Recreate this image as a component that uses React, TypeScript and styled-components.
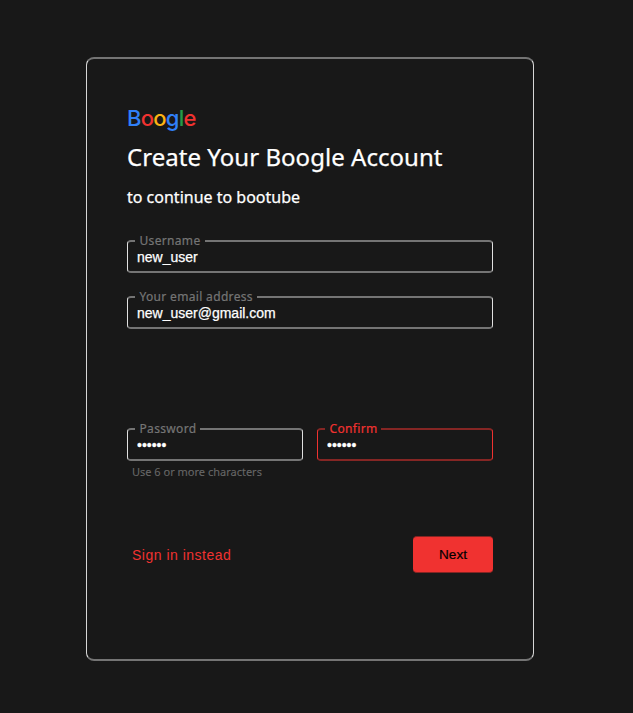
import React from "react";
import styled, { createGlobalStyle } from "styled-components";

const GlobalStyle = createGlobalStyle`
  *, *::before, *::after { box-sizing: border-box; }
  body { margin: 0; background: #181818; font-family: "Noto Sans", sans-serif; overflow: hidden; }
`;

const Page = styled.main`
  height: 713px;
  padding: 57px 0 0 86px;
  background: #181818;
  color: #fff;
`;

const Card = styled.form`
  display: flex;
  flex-direction: column;
  width: 448px;
  height: 604px;
  padding: 43px 40px 0;
  border: solid #d6d6d6;
  border-width: 2px 1px;
  border-top-color: #747474;
  border-bottom-color: #747474;
  border-radius: 8px;
`;

const Logo = styled.div`
  height: 36px;
  font: 500 22px/33px Inter, sans-serif;
  letter-spacing: -0.75px;
`;

const Letter = styled.span<{ $color: string }>`
  color: ${(p) => p.$color};
`;

const Title = styled.h1`
  margin: 0;
  height: 36px;
  font-size: 24px;
  font-weight: 400;
  line-height: 38px;
  letter-spacing: 0.04px;
  white-space: nowrap;
  -webkit-text-stroke: 0.25px #fff;
`;

const Subtitle = styled.p`
  margin: 6px 0 0;
  height: 60px;
  font-size: 16px;
  line-height: 34px;
  -webkit-text-stroke: 0.25px #fff;
`;

const Field = styled.div`
  position: relative;
  flex: 1;
`;

const Label = styled.label<{ $error?: boolean }>`
  position: absolute;
  top: -8px;
  left: 8px;
  padding: 0 4px 0 4.5px;
  background: #181818;
  color: ${(p) => (p.$error ? "#f03230" : "#757575")};
  font-size: 12px;
  line-height: 17px;
  letter-spacing: 0.33px;
  -webkit-text-stroke: 0.2px;
`;

const Input = styled.input<{ $error?: boolean }>`
  display: block;
  width: 100%;
  height: 33px;
  padding: 1px 9px 0;
  outline: none;
  border: solid ${(p) => (p.$error ? "#f03230" : "#e0e0e0")};
  border-width: 2px 1px;
  border-top-color: ${(p) => (p.$error ? "#852624" : "#747474")};
  border-bottom-color: ${(p) => (p.$error ? "#852624" : "#747474")};
  border-radius: 4px;
  background: transparent;
  color: #fff;
  font: 14px "Liberation Sans", Arial, sans-serif;
  -webkit-text-stroke: 0.25px #fff;
`;

const Stack = styled.div`
  display: grid;
  gap: 23px;
`;

const Passwords = styled.div`
  display: flex;
  gap: 14px;
  margin-top: 99px;
`;

const Hint = styled.div`
  margin: 2px 0 0 5px;
  height: 18px;
  color: #676767;
  font-size: 11px;
  line-height: 17px;
  -webkit-text-stroke: 0.1px;
`;

const Actions = styled.div`
  display: flex;
  align-items: center;
  justify-content: space-between;
  margin-top: 55px;
`;

const SignIn = styled.a`
  margin-left: 5px;
  color: #f03230;
  font: 14px "Liberation Sans", Arial, sans-serif;
  letter-spacing: 0.5px;
`;

const NextButton = styled.button`
  width: 80px;
  height: 37px;
  padding: 0;
  border: solid #f03230;
  border-width: 1px 0;
  border-top-color: #842523;
  border-bottom-color: #842523;
  border-radius: 4px;
  background: #f03230;
  color: #000;
  font: 13.6px "Liberation Sans", Arial, sans-serif;
  -webkit-text-stroke: 0.2px;
`;

const logoLetters: [string, string][] = [
  ["B", "#3080f8"],
  ["o", "#f03230"],
  ["o", "#fbb314"],
  ["g", "#3080f8"],
  ["l", "#249a48"],
  ["e", "#f03230"],
];

interface TextFieldProps {
  id: string;
  label: string;
  value: string;
  type?: string;
  error?: boolean;
}

function TextField({ id, label, value, type = "text", error }: TextFieldProps) {
  return (
    <Field>
      <Input id={id} type={type} defaultValue={value} $error={error} spellCheck={false} />
      <Label htmlFor={id} $error={error}>{label}</Label>
    </Field>
  );
}

export default function App() {
  return (
    <>
      <GlobalStyle />
      <Page>
        <Card>
          <Logo>
            {logoLetters.map(([char, color], i) => (
              <Letter key={i} $color={color}>{char}</Letter>
            ))}
          </Logo>
          <Title>Create Your Boogle Account</Title>
          <Subtitle>to continue to bootube</Subtitle>
          <Stack>
            <TextField id="username" label="Username" value="new_user" />
            <TextField id="email" label="Your email address" value="new_user@gmail.com" />
          </Stack>
          <Passwords>
            <TextField id="password" label="Password" value="secret" type="password" />
            <TextField id="confirm" label="Confirm" value="secre7" type="password" error />
          </Passwords>
          <Hint>Use 6 or more characters</Hint>
          <Actions>
            <SignIn>Sign in instead</SignIn>
            <NextButton type="button">Next</NextButton>
          </Actions>
        </Card>
      </Page>
    </>
  );
}
